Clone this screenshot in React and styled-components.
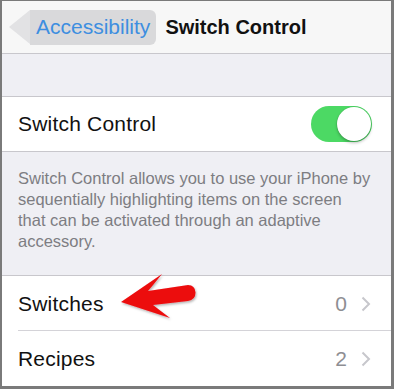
import React from "react";
import styled, { createGlobalStyle } from "styled-components";

const Global = createGlobalStyle`
  html, body { margin: 0; padding: 0; background: #fff; }
  body { font-family: "Liberation Sans", Arial, sans-serif; }
`;

const Frame = styled.div`
  position: relative;
  box-sizing: border-box;
  width: 394px;
  height: 389px;
  border-style: solid;
  border-color: #7a7a7a;
  border-width: 1px 3px 3px 2px;
  background: #efeff4;
  display: flex;
  flex-direction: column;
  overflow: hidden;
`;

const NavBar = styled.div`
  height: 52px;
  flex: none;
  background: #f7f7f7;
  border-bottom: 1px solid #c8c7cc;
  display: flex;
  align-items: center;
  padding-left: 28px;
  gap: 9px;
`;

const BackButton = styled.div`
  position: relative;
  height: 35px;
  padding: 0 6px 0 6px;
  background: #d9d9db;
  border-radius: 0 6px 6px 0;
  display: flex;
  align-items: center;
  color: #3d8ee0;
  font-size: 21px;
  &::before {
    content: "";
    position: absolute;
    left: -21px;
    top: 0;
    width: 0;
    height: 0;
    border-top: 17.5px solid transparent;
    border-bottom: 17.5px solid transparent;
    border-right: 21px solid #e2e2e4;
  }
`;

const NavTitle = styled.div`
  font-size: 20px;
  font-weight: bold;
  color: #111;
`;

const Spacer = styled.div`
  height: ${(p) => p.h}px;
  flex: none;
`;

const Group = styled.div`
  background: #fff;
  border-top: 1px solid #c8c7cc;
  border-bottom: ${(p) => (p.noBottom ? "none" : "1px solid #c8c7cc")};
  flex: none;
`;

const Row = styled.div`
  height: ${(p) => p.h || 54}px;
  display: flex;
  align-items: center;
  padding-left: 16px;
  padding-right: 20px;
  box-sizing: border-box;
  position: relative;
  &:not(:last-child)::after {
    content: "";
    position: absolute;
    left: 16px;
    right: 0;
    bottom: 0;
    height: 1px;
    background: #d4d3d8;
  }
`;

const Label = styled.div`
  flex: 1;
  font-size: 21px;
  color: #111;
  letter-spacing: 0.2px;
`;

const Value = styled.div`
  font-size: 21px;
  color: #8e8e93;
  margin-right: 14px;
`;

const Toggle = styled.div`
  width: 61px;
  height: 36px;
  border-radius: 18px;
  background: #4cd964;
  position: relative;
  margin-right: -1px;
  &::after {
    content: "";
    position: absolute;
    right: 1px;
    top: 1px;
    width: 34px;
    height: 34px;
    border-radius: 50%;
    background: #fff;
    box-shadow: 0 2px 3px rgba(0, 0, 0, 0.25), 0 0 0 0.5px rgba(0, 0, 0, 0.1);
  }
`;

const Footer = styled.div`
  padding: 16px 6px 0 16px;
  font-size: 16.5px;
  line-height: 21px;
  color: #7d7d82;
  height: 123px;
  box-sizing: border-box;
  flex: none;
  white-space: nowrap;
`;

const Chevron = () => (
  <svg width="10" height="16" viewBox="0 0 10 16">
    <path d="M1.5 1.5 L8 8 L1.5 14.5" fill="none" stroke="#c7c7cc" strokeWidth="2" />
  </svg>
);

const Pointer = styled.svg`
  position: absolute;
  left: 0;
  top: 0;
  pointer-events: none;
`;

export default function App() {
  return (
    <>
      <Global />
      <Frame>
        <NavBar>
          <BackButton>Accessibility</BackButton>
          <NavTitle>Switch Control</NavTitle>
        </NavBar>
        <Spacer h={42} />
        <Group>
          <Row h={54}>
            <Label>Switch Control</Label>
            <Toggle />
          </Row>
        </Group>
        <Footer>
          Switch Control allows you to use your iPhone by
          <br />
          sequentially highlighting items on the screen
          <br />
          that can be activated through an adaptive
          <br />
          accessory.
        </Footer>
        <Group noBottom>
          <Row h={55}>
            <Label>Switches</Label>
            <Value>0</Value>
            <Chevron />
          </Row>
          <Row h={55}>
            <Label>Recipes</Label>
            <Value>2</Value>
            <Chevron />
          </Row>
        </Group>
        <Pointer width="394" height="389" viewBox="0 0 394 389">
          <defs>
            <filter id="sh" x="-20%" y="-20%" width="140%" height="140%">
              <feDropShadow dx="1" dy="1.5" stdDeviation="1" floodColor="#000" floodOpacity="0.3" />
            </filter>
          </defs>
          <path
            d="M119 301 L160 273 Q152 283 146 290 L186 284 Q193 284 193.5 291.5 Q193.5 299 186 300 L151 304 Q160 311 168 317 Z"
            fill="#ec0a0f"
            filter="url(#sh)"
          />
        </Pointer>
      </Frame>
    </>
  );
}
